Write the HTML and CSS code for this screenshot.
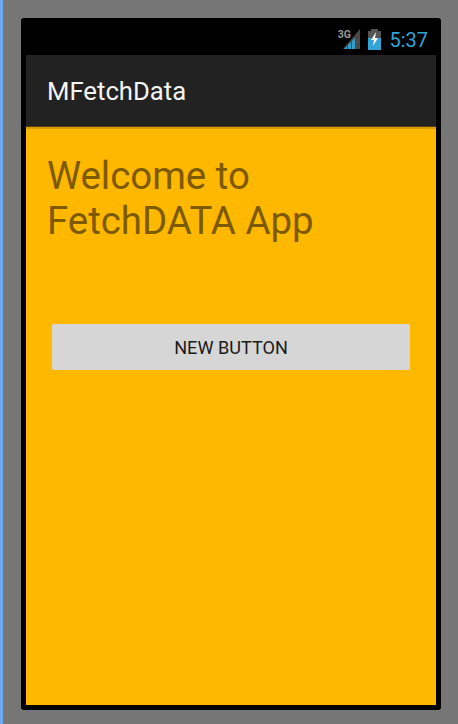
FILE: index.html
```html
<!DOCTYPE html>
<html lang="en">
<head>
    <meta charset="UTF-8">
    <meta name="viewport" content="width=device-width, initial-scale=1.0">
    <title>MFetchData</title>
    <link rel="stylesheet" href="styles.css">
</head>
<body>

    <div class="device">
        <div class="status-bar">
            <span class="net-label">3G</span>
            <svg class="signal" width="18" height="21" viewBox="0 0 18 21">
                <polygon points="17,0 17,20 0,20" fill="#4a4a4a"/>
                <polygon points="1,20 4,17 4,20" fill="#2f9fc9"/>
                <polygon points="5,20 5,16 8,13 8,20" fill="#2f9fc9"/>
                <polygon points="9,20 9,12 12,9 12,20" fill="#2f9fc9"/>
            </svg>
            <svg class="battery" width="13" height="21" viewBox="0 0 13 21">
                <rect x="3" y="0" width="7" height="2" fill="#555"/>
                <rect x="0" y="2" width="13" height="7" fill="#555"/>
                <rect x="0" y="9" width="13" height="12" fill="#33a5d5"/>
                <polygon points="8,3 3,11 6,11 5,17 10,9 7,9" fill="#fff"/>
            </svg>
            <span class="clock">5:37</span>
        </div>

        <div class="screen">
            <div class="action-bar">MFetchData</div>
            <div class="content">
                <h1 class="welcome">Welcome to FetchDATA App</h1>
                <button class="btn">NEW BUTTON</button>
            </div>
        </div>
    </div>

</body>
</html>
```

FILE: styles.css
```css
html, body {
    height: 100%;
}
body {
    margin: 0;
    padding: 18px 0 0 18px;
    box-sizing: border-box;
    background-color: #767676;
    border-left: 3px solid #6ea8f0;
    overflow: hidden;
    font-family: Roboto, sans-serif;
}
.device {
    width: 420px;
    height: 692px;
    box-sizing: border-box;
    padding: 0 5px 5px;
    background-color: #000;
    border-radius: 3px;
    display: flex;
    flex-direction: column;
}
.status-bar {
    height: 37px;
    flex: none;
    display: flex;
    align-items: center;
    justify-content: flex-end;
    padding-right: 8px;
    position: relative;
}
.net-label {
    position: absolute;
    right: 85px;
    top: 10px;
    font-size: 10.5px;
    font-weight: 700;
    color: #9a9a9a;
}
.signal {
    margin-top: 5px;
    margin-right: 7px;
}
.battery {
    margin-top: 5px;
    margin-right: 8px;
}
.clock {
    font-size: 20px;
    color: #33a5d5;
    margin-top: 6px;
}
.screen {
    flex: 1;
    display: flex;
    flex-direction: column;
}
.action-bar {
    height: 71px;
    flex: none;
    box-sizing: border-box;
    padding-left: 21px;
    display: flex;
    align-items: center;
    background-color: #222;
    color: #f4f4f4;
    font-size: 25.7px;
}
.content {
    flex: 1;
    background-color: #ffb800;
    border-top: 1px solid #5a4010;
    box-shadow: inset 0 2px 0 #d89c08;
    padding: 26px 26px 0 21px;
}
.welcome {
    margin: 0;
    font-size: 38.4px;
    font-weight: 400;
    line-height: 45px;
    color: #7d5a00;
}
.btn {
    display: block;
    width: 358px;
    height: 46px;
    margin: 81px 0 0 5px;
    border: none;
    border-radius: 2px;
    background-color: #d6d6d6;
    color: #1a1a1a;
    font-family: Roboto, sans-serif;
    font-size: 18.1px;
}
```
